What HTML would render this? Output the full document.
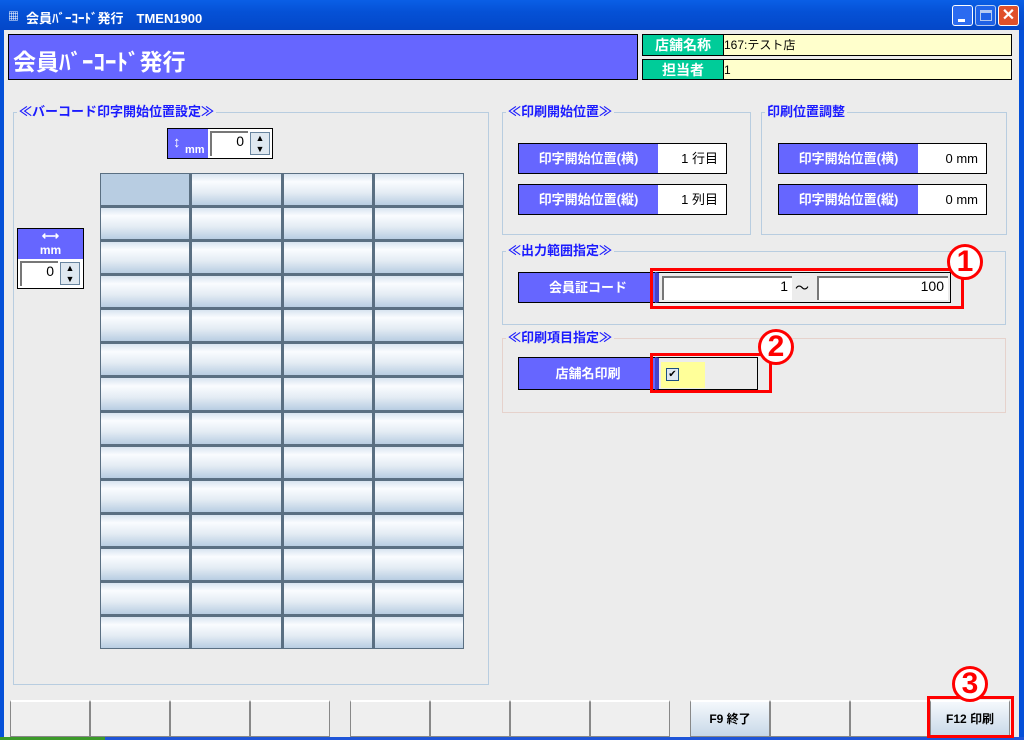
<!DOCTYPE html>
<html><head><meta charset="utf-8"><style>
*{margin:0;padding:0;box-sizing:border-box}
body{width:1024px;height:740px;overflow:hidden;background:#ececec;font-family:"Liberation Sans","Noto Sans CJK JP",sans-serif;position:relative}
.a{position:absolute}
.tb{left:0;top:0;width:1024px;height:30px;background:linear-gradient(#0a5fe6,#0551d6 40%,#0447c8);color:#fff;font-weight:bold;font-size:13px}
.frame{background:#0550d8}
.hdr{left:8px;top:34px;width:630px;height:46px;background:#6666ff;border:1px solid #000;color:#fff;font-size:23px;font-weight:bold;padding:8px 0 0 4px}
.gl{background:#00cc99;border:1px solid #000;color:#fff;font-weight:bold;font-size:14px;text-align:center;line-height:20px}
.yf{background:#ffffcc;border:1px solid #000;font-size:12px;line-height:20px}
.grp{border:1px solid #b8cde0}
.gt{background:#ececec;color:#1a1aff;font-weight:bold;font-size:13px;padding:0 2px;line-height:16px}
.pl{background:#6666ff;color:#fff;font-weight:bold;font-size:13px;text-align:center;border:1px solid #000}
.wv{background:#fff;border:1px solid #000;border-left:none;font-size:13px;text-align:right;padding-right:8px}
.cell{border:1px solid #5a6f82;background:linear-gradient(#d8e4f0,#fafcff 25%,#e4ecf4 60%,#b8cde2)}
.btn{border:1px solid #888;background:#efefef;border-top:2px solid #fff}
.rb{border:3px solid #f00}
.circ{width:36px;height:36px;border-radius:50%;border:3px solid #f00;background:#fff;color:#f00;font-weight:bold;font-size:30px;text-align:center;line-height:30px}
.in{background:#fff;border-top:2px solid #777;border-left:2px solid #777;font-size:14px;text-align:right;padding-right:4px}
</style></head><body>
<div class="a tb"><span class="a" style="left:8px;top:8px;font-size:11px">▦</span><span class="a" style="left:26px;top:8px">会員ﾊﾞｰｺｰﾄﾞ発行　TMEN1900</span>
<div class="a" style="left:952px;top:5px;width:21px;height:21px;background:#2b6bf0;border:1px solid #fff;border-radius:3px"><div class="a" style="left:5px;top:13px;width:7px;height:3px;background:#fff"></div></div>
<div class="a" style="left:975px;top:5px;width:21px;height:21px;background:#2b6bf0;border:1px solid #fff;border-radius:3px;opacity:.7"><div class="a" style="left:4px;top:4px;width:12px;height:11px;border:1px solid #fff;border-top-width:3px"></div></div>
<div class="a" style="left:998px;top:5px;width:21px;height:21px;background:#e0502a;border:1px solid #fff;border-radius:3px;color:#fff;font-size:16px;text-align:center;line-height:19px">✕</div></div>
<div class="a frame" style="left:0;top:30px;width:4px;height:710px"></div>
<div class="a frame" style="left:1019px;top:30px;width:5px;height:710px"></div>
<div class="a" style="left:0;top:737px;width:1024px;height:3px;background:#1f55d8"></div>
<div class="a" style="left:0;top:737px;width:105px;height:3px;background:#3c9a2a"></div>

<div class="a hdr">会員ﾊﾞｰｺｰﾄﾞ発行</div>
<div class="a gl" style="left:642px;top:34px;width:82px;height:22px">店舗名称</div>
<div class="a yf" style="left:723px;top:34px;width:289px;height:22px">167:テスト店</div>
<div class="a gl" style="left:642px;top:59px;width:82px;height:21px">担当者</div>
<div class="a yf" style="left:723px;top:59px;width:289px;height:21px">1</div>

<div class="a grp" style="left:13px;top:112px;width:476px;height:573px"></div>
<div class="a gt" style="left:17px;top:104px">≪バーコード印字開始位置設定≫</div>
<div class="a" style="left:167px;top:128px;width:106px;height:31px;border:1px solid #000;background:#fff"></div>
<div class="a" style="left:168px;top:129px;width:40px;height:29px;background:#6666ff;color:#fff;font-size:11px;font-weight:bold"><span class="a" style="left:5px;top:0;font-size:15px;line-height:28px">↕</span><span class="a" style="left:17px;top:15px">mm</span></div>
<div class="a in" style="left:210px;top:131px;width:38px;height:25px">0</div>
<div class="a" style="left:250px;top:132px;width:20px;height:23px;border:1px solid #6a86a0;background:#dfe8f0;font-size:9px;text-align:center;line-height:11px">▲<br>▼</div>

<div class="a" style="left:17px;top:228px;width:67px;height:61px;border:1px solid #000;background:#fff"></div>
<div class="a" style="left:18px;top:229px;width:65px;height:30px;background:#6666ff;color:#fff;font-size:12px;font-weight:bold;text-align:center;line-height:14px">⟷<br>mm</div>
<div class="a in" style="left:20px;top:261px;width:38px;height:25px">0</div>
<div class="a" style="left:60px;top:262px;width:20px;height:23px;border:1px solid #6a86a0;background:#dfe8f0;font-size:9px;text-align:center;line-height:11px">▲<br>▼</div>

<div class="a" style="left:100px;top:173px;width:364px;height:476px;background:#5a6f82;display:grid;grid-template-columns:repeat(4,1fr);grid-template-rows:repeat(14,1fr);gap:1px">
<div class="cell" style="background:#b8cde2"></div><div class="cell"></div><div class="cell"></div><div class="cell"></div>
<div class="cell"></div><div class="cell"></div><div class="cell"></div><div class="cell"></div>
<div class="cell"></div><div class="cell"></div><div class="cell"></div><div class="cell"></div>
<div class="cell"></div><div class="cell"></div><div class="cell"></div><div class="cell"></div>
<div class="cell"></div><div class="cell"></div><div class="cell"></div><div class="cell"></div>
<div class="cell"></div><div class="cell"></div><div class="cell"></div><div class="cell"></div>
<div class="cell"></div><div class="cell"></div><div class="cell"></div><div class="cell"></div>
<div class="cell"></div><div class="cell"></div><div class="cell"></div><div class="cell"></div>
<div class="cell"></div><div class="cell"></div><div class="cell"></div><div class="cell"></div>
<div class="cell"></div><div class="cell"></div><div class="cell"></div><div class="cell"></div>
<div class="cell"></div><div class="cell"></div><div class="cell"></div><div class="cell"></div>
<div class="cell"></div><div class="cell"></div><div class="cell"></div><div class="cell"></div>
<div class="cell"></div><div class="cell"></div><div class="cell"></div><div class="cell"></div>
<div class="cell"></div><div class="cell"></div><div class="cell"></div><div class="cell"></div>
</div>

<div class="a grp" style="left:502px;top:112px;width:249px;height:123px"></div>
<div class="a gt" style="left:506px;top:104px">≪印刷開始位置≫</div>
<div class="a pl" style="left:518px;top:143px;width:141px;height:31px;line-height:29px">印字開始位置(横)</div>
<div class="a wv" style="left:658px;top:143px;width:69px;height:31px;line-height:29px">1 行目</div>
<div class="a pl" style="left:518px;top:184px;width:141px;height:31px;line-height:29px">印字開始位置(縦)</div>
<div class="a wv" style="left:658px;top:184px;width:69px;height:31px;line-height:29px">1 列目</div>

<div class="a grp" style="left:761px;top:112px;width:246px;height:123px"></div>
<div class="a gt" style="left:765px;top:104px">印刷位置調整</div>
<div class="a pl" style="left:778px;top:143px;width:141px;height:31px;line-height:29px">印字開始位置(横)</div>
<div class="a wv" style="left:918px;top:143px;width:69px;height:31px;line-height:29px">0 mm</div>
<div class="a pl" style="left:778px;top:184px;width:141px;height:31px;line-height:29px">印字開始位置(縦)</div>
<div class="a wv" style="left:918px;top:184px;width:69px;height:31px;line-height:29px">0 mm</div>

<div class="a grp" style="left:502px;top:251px;width:504px;height:74px"></div>
<div class="a gt" style="left:506px;top:243px">≪出力範囲指定≫</div>
<div class="a pl" style="left:518px;top:272px;width:140px;height:31px;line-height:29px">会員証コード</div>
<div class="a" style="left:655px;top:272px;width:296px;height:31px;border:1px solid #000;border-left:4px solid #4444cc;background:#ececec"></div>
<div class="a in" style="left:662px;top:276px;width:130px;height:24px">1</div>
<div class="a" style="left:795px;top:278px;font-size:14px">〜</div>
<div class="a in" style="left:817px;top:276px;width:131px;height:24px">100</div>
<div class="a rb" style="left:650px;top:268px;width:314px;height:41px"></div>
<div class="a circ" style="left:947px;top:244px">1</div>

<div class="a grp" style="left:502px;top:338px;width:504px;height:75px;border-color:#e6d2cc"></div>
<div class="a gt" style="left:506px;top:330px">≪印刷項目指定≫</div>
<div class="a pl" style="left:518px;top:357px;width:140px;height:33px;line-height:31px">店舗名印刷</div>
<div class="a" style="left:655px;top:357px;width:103px;height:33px;border:1px solid #000;border-left:4px solid #4444cc;background:#ececec"></div>
<div class="a" style="left:661px;top:362px;width:44px;height:26px;background:#ffff99"></div>
<div class="a" style="left:666px;top:368px;width:13px;height:13px;border:1px solid #1c4f80;background:#dfe8f2;font-size:10px;line-height:11px;text-align:center">✔</div>
<div class="a rb" style="left:650px;top:353px;width:122px;height:40px"></div>
<div class="a circ" style="left:758px;top:329px">2</div>

<div class="a" style="left:10px;top:700px;width:320px;height:37px;display:flex"><div class="btn" style="flex:1"></div><div class="btn" style="flex:1"></div><div class="btn" style="flex:1"></div><div class="btn" style="flex:1"></div></div>
<div class="a" style="left:350px;top:700px;width:320px;height:37px;display:flex"><div class="btn" style="flex:1"></div><div class="btn" style="flex:1"></div><div class="btn" style="flex:1"></div><div class="btn" style="flex:1"></div></div>
<div class="a" style="left:690px;top:700px;width:320px;height:37px;display:flex">
<div class="btn" style="flex:1;background:linear-gradient(#f4f8fc,#c8d8e8);font-size:12px;font-weight:bold;text-align:center;line-height:34px">F9 終了</div>
<div class="btn" style="flex:1"></div><div class="btn" style="flex:1"></div>
<div class="btn" style="flex:1;background:linear-gradient(#f4f8fc,#c8d8e8);font-size:12px;font-weight:bold;text-align:center;line-height:34px">F12 印刷</div></div>
<div class="a rb" style="left:927px;top:696px;width:87px;height:42px"></div>
<div class="a circ" style="left:952px;top:666px">3</div>
</body></html>
